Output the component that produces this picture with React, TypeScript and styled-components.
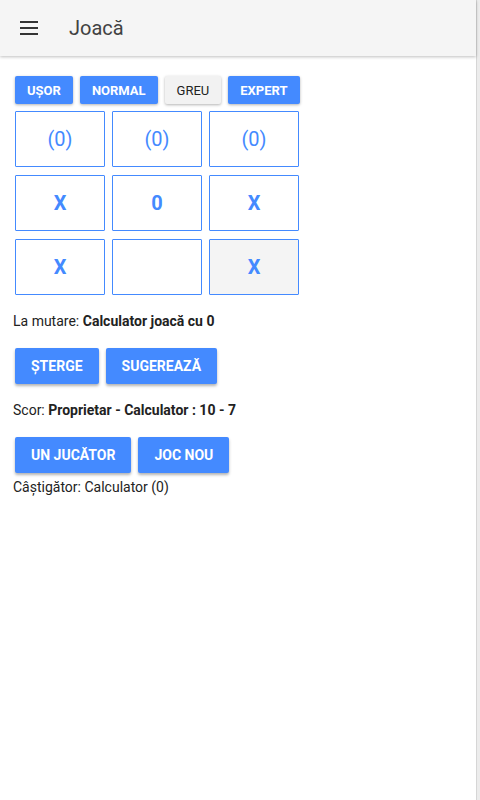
import React from "react";
import styled, { createGlobalStyle } from "styled-components";

const GlobalStyle = createGlobalStyle`
  html, body {
    margin: 0;
    padding: 0;
    background: #ececec;
    font-family: Roboto, "Liberation Sans", Arial, sans-serif;
  }
`;

const cells = [
  { text: "(0)", hint: true },
  { text: "(0)", hint: true },
  { text: "(0)", hint: true },
  { text: "X" },
  { text: "0" },
  { text: "X" },
  { text: "X" },
  { text: "" },
  { text: "X", last: true },
];

const App = () => {
  return (
    <>
      <GlobalStyle />
      <Page>
        <Header>
          <MenuIcon viewBox="0 0 18 14">
            <rect x="0" y="0" width="18" height="2" />
            <rect x="0" y="6" width="18" height="2" />
            <rect x="0" y="12" width="18" height="2" />
          </MenuIcon>
          <Title>Joacă</Title>
        </Header>
        <Content>
          <LevelRow>
            <LevelButton>Ușor</LevelButton>
            <LevelButton>Normal</LevelButton>
            <LevelButton $active>Greu</LevelButton>
            <LevelButton>Expert</LevelButton>
          </LevelRow>
          <Board>
            {cells.map((c, i) => (
              <Cell key={i} $hint={c.hint} $last={c.last}>
                {c.text}
              </Cell>
            ))}
          </Board>
          <Info>
            La mutare: <b>Calculator joacă cu 0</b>
          </Info>
          <ButtonRow>
            <ActionButton>Șterge</ActionButton>
            <ActionButton>Sugerează</ActionButton>
          </ButtonRow>
          <Info>
            Scor: <b>Proprietar - Calculator : 10 - 7</b>
          </Info>
          <ButtonRow>
            <ActionButton>Un jucător</ActionButton>
            <ActionButton>Joc nou</ActionButton>
          </ButtonRow>
          <Winner>Câștigător: Calculator (0)</Winner>
        </Content>
      </Page>
    </>
  );
};

export default App;

const Page = styled.div`
  width: 476px;
  min-height: 800px;
  background: #fff;
  border-right: 1px solid #d6d6d6;
`;

const Header = styled.div`
  display: flex;
  align-items: center;
  height: 56px;
  background: #f5f5f5;
  box-shadow: 0 1px 3px rgba(0, 0, 0, 0.25);
  position: relative;
`;

const MenuIcon = styled.svg`
  width: 18px;
  height: 14px;
  margin-left: 20px;
  fill: #333;
`;

const Title = styled.div`
  margin-left: 31px;
  font-size: 20px;
  color: #424242;
`;

const Content = styled.div`
  padding: 20px 15px;
`;

const LevelRow = styled.div`
  display: flex;
  gap: 7px;
`;

const LevelButton = styled.button<{ $active?: boolean }>`
  height: 28px;
  padding: 0 12px;
  border: 0;
  border-radius: 2px;
  font-family: Roboto, "Liberation Sans", Arial, sans-serif;
  font-size: 13px;
  font-weight: ${(p) => (p.$active ? 400 : 700)};
  text-transform: uppercase;
  color: ${(p) => (p.$active ? "#222" : "#fff")};
  background: ${(p) => (p.$active ? "#f2f2f2" : "#448aff")};
  box-shadow: 0 1px 3px rgba(0, 0, 0, 0.3);
`;

const Board = styled.div`
  display: grid;
  grid-template-columns: repeat(3, 90px);
  grid-auto-rows: 56px;
  column-gap: 7px;
  row-gap: 8px;
  margin-top: 7px;
`;

const Cell = styled.div<{ $hint?: boolean; $last?: boolean }>`
  display: flex;
  align-items: center;
  justify-content: center;
  box-sizing: border-box;
  border: 1px solid #448aff;
  border-radius: 1px;
  background: ${(p) => (p.$last ? "#f4f4f4" : "#fff")};
  color: #448aff;
  font-size: 20px;
  font-weight: ${(p) => (p.$hint ? 400 : 700)};
`;

const Info = styled.div`
  margin-top: 18px;
  margin-left: -2px;
  font-size: 14px;
  color: #222;
  b {
    font-weight: 700;
  }
`;

const ButtonRow = styled.div`
  display: flex;
  gap: 7px;
  margin-top: 19px;
`;

const ActionButton = styled.button`
  height: 36px;
  padding: 0 16px;
  border: 0;
  border-radius: 2px;
  font-family: Roboto, "Liberation Sans", Arial, sans-serif;
  font-size: 14px;
  font-weight: 700;
  text-transform: uppercase;
  color: #fff;
  background: #448aff;
  box-shadow: 0 2px 3px rgba(0, 0, 0, 0.3);
`;

const Winner = styled.div`
  margin-top: 6px;
  margin-left: -2px;
  font-size: 14px;
  color: #222;
`;
